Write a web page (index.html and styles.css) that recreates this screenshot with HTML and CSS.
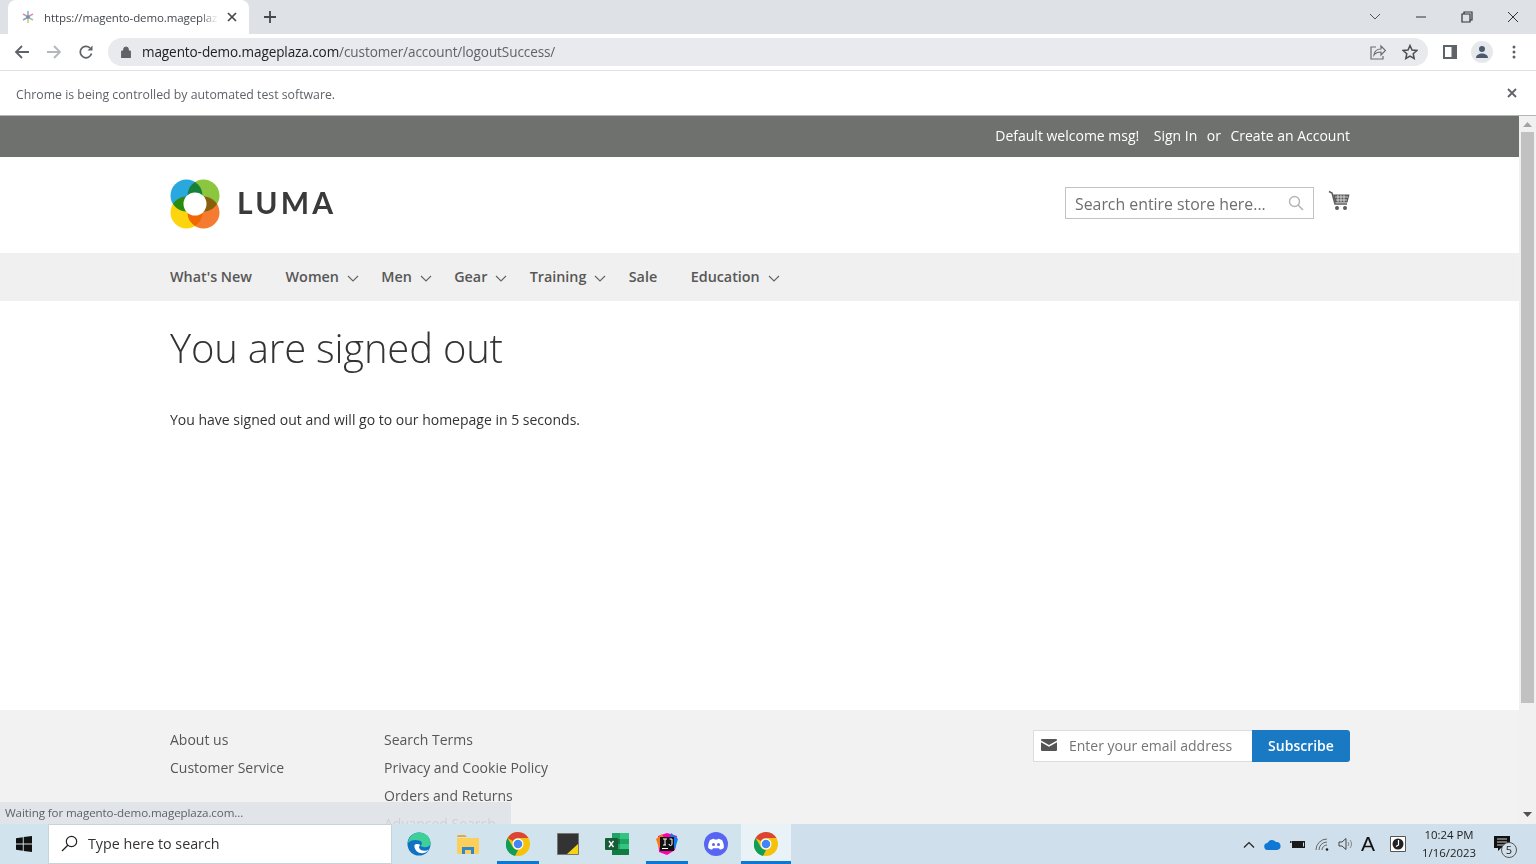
FILE: index.html
```html
<!DOCTYPE html>
<html>
<head>
    <meta charset="UTF-8">
    <meta name="viewport" content="width=device-width, initial-scale=1.0">
    <title>You are signed out</title>
    <link rel="stylesheet" href="styles.css">
</head>
<body>
    <div class="tabstrip">
        <div class="tab">
            <svg class="favicon" width="16" height="16" viewBox="0 0 16 16"><g fill="none" stroke-width="1.600"><path d="M8 2v5" stroke="#7fb5d8"/><path d="M13 5L8.500 7.500" stroke="#e58fb0"/><path d="M13 11L8.500 8.500" stroke="#9ac7a0"/><path d="M8 14V9" stroke="#e8c070"/><path d="M3 11l4.500-2.500" stroke="#8aa0d0"/><path d="M3 5l4.500 2.500" stroke="#d09a9a"/></g><circle cx="8" cy="8" r="1.800" fill="#6f8fb0"/></svg>
            <span class="tab-title">https://magento-demo.mageplaz</span>
            <svg class="tab-close" width="10" height="10" viewBox="0 0 10 10"><path d="M1 1l8 8M9 1l-8 8" stroke="#45484c" stroke-width="1.700"/></svg>
        </div>
        <svg class="new-tab" width="14" height="14" viewBox="0 0 14 14"><path d="M7 1v12M1 7h12" stroke="#45484c" stroke-width="1.800"/></svg>
        <div class="window-controls">
            <svg width="12" height="8" viewBox="0 0 12 8"><path d="M1 1l5 5 5-5" fill="none" stroke="#50535a" stroke-width="1"/></svg>
            <svg width="12" height="2" viewBox="0 0 12 2"><path d="M1 1h10" stroke="#30333a" stroke-width="1"/></svg>
            <svg width="12" height="12" viewBox="0 0 12 12"><path d="M3 3V1h8v8H9M1 3h8v8H1z" fill="none" stroke="#30333a" stroke-width="1.200"/></svg>
            <svg width="12" height="12" viewBox="0 0 12 12"><path d="M1 1l10 10M11 1L1 11" stroke="#30333a" stroke-width="1"/></svg>
        </div>
    </div>

    <div class="toolbar">
        <div class="nav-buttons">
            <svg width="16" height="16" viewBox="0 0 16 16"><path d="M15 8H2M8 2L2 8l6 6" fill="none" stroke="#5f6368" stroke-width="1.800"/></svg>
            <svg width="16" height="16" viewBox="0 0 16 16"><path d="M1 8h13M8 2l6 6-6 6" fill="none" stroke="#b4b7bb" stroke-width="1.800"/></svg>
            <svg width="16" height="16" viewBox="0 0 16 16"><path d="M13.500 9.500A5.700 5.700 0 1 1 12 4" fill="none" stroke="#5f6368" stroke-width="1.700"/><path d="M14.500 1.500v5h-5z" fill="#5f6368"/></svg>
        </div>
        <div class="omnibox">
            <svg class="lock" width="10" height="12" viewBox="0 0 10 12"><path d="M1 5h8a.8.8 0 0 1 .8.800v5.400a.8.8 0 0 1-.8.800H1a.8.8 0 0 1-.8-.8V5.800A.8.8 0 0 1 1 5zM2.600 5V3.400a2.400 2.400 0 0 1 4.800 0V5" fill="#5f6368" stroke="#5f6368"/></svg>
            <span class="url"><span class="url-host">magento-demo.mageplaza.com</span>/customer/account/logoutSuccess/</span>
            <div class="omnibox-icons">
                <svg width="16" height="16" viewBox="0 0 16 16"><path d="M6 3H1v12h12v-3" fill="none" stroke="#6a6d72" stroke-width="1.200"/><path d="M4 11c.5-4 3.500-6 7-6V2l4.500 4.500L11 11V8c-3 0-5.500 1-7 3z" fill="none" stroke="#6a6d72" stroke-width="1.200"/></svg>
                <svg width="16" height="16" viewBox="0 0 16 16"><path d="M8 1.500l2 4.500 4.800.5-3.600 3.200 1 4.800L8 12.100l-4.200 2.400 1-4.800L1.200 6.500 6 6z" fill="none" stroke="#4b4e53" stroke-width="1.500"/></svg>
            </div>
        </div>
        <div class="toolbar-right">
            <svg width="14" height="14" viewBox="0 0 14 14"><path d="M0 0h14v14H0z" fill="#5f6368"/><path d="M2 2h6.500v10H2z" fill="#fff"/></svg>
            <div class="avatar"><svg width="14" height="12" viewBox="0 0 14 12"><circle cx="7" cy="3" r="3" fill="#4c5a70"/><path d="M1 12c0-3 3-4.500 6-4.500s6 1.500 6 4.500z" fill="#4c5a70"/></svg></div>
            <svg width="4" height="14" viewBox="0 0 4 14"><g fill="#5f6368"><circle cx="2" cy="2" r="1.500"/><circle cx="2" cy="7" r="1.500"/><circle cx="2" cy="12" r="1.500"/></g></svg>
        </div>
    </div>

    <div class="infobar">
        <span class="infobar-text">Chrome is being controlled by automated test software.</span>
        <svg width="10" height="10" viewBox="0 0 10 10"><path d="M1 1l8 8M9 1l-8 8" stroke="#5f6368" stroke-width="1.800"/></svg>
    </div>

    <div class="viewport">
        <div class="page">
            <div class="panel">
                <div class="container panel-links">
                    <span class="welcome">Default welcome msg!</span>
                    <a>Sign In</a>
                    <span>or</span>
                    <a>Create an Account</a>
                </div>
            </div>
            <header class="container site-header">
                <div class="logo">
                    <svg width="50" height="50" viewBox="0 0 50 50">
                        <circle cx="16.500" cy="16.500" r="16" fill="#29a8df"/>
                        <circle cx="33.500" cy="16.500" r="16" fill="#8cc63f" class="logo-blend"/>
                        <circle cx="16.500" cy="33.500" r="16" fill="#fdd50f" class="logo-blend"/>
                        <circle cx="33.500" cy="33.500" r="16" fill="#f47b30" class="logo-blend"/>
                        <circle cx="25" cy="25" r="11.500" fill="#fff"/>
                    </svg>
                    <span class="logo-text">LUMA</span>
                </div>
                <div class="header-tools">
                    <div class="search">
                        <span class="search-text">Search entire store here...</span>
                        <svg width="16" height="16" viewBox="0 0 16 16"><circle cx="6.500" cy="6.500" r="5" fill="none" stroke="#b5b5b5" stroke-width="1.400"/><path d="M10 10l5 5" stroke="#b5b5b5" stroke-width="1.600"/></svg>
                    </div>
                    <svg class="cart" width="22" height="22" viewBox="0 0 22 22"><path d="M1 1.500l3 1.500 3 11h12" fill="none" stroke="#5a5a5a" stroke-width="1.500"/><path d="M5 4.500h16.500l-2 8H7z" fill="#5a5a5a"/><path d="M7 7h13M8 10h11M10 5v7M13 5v7M16 5v7" stroke="#fff" stroke-width=".7"/><circle cx="9" cy="18" r="2" fill="#5a5a5a"/><circle cx="17" cy="18" r="2" fill="#5a5a5a"/></svg>
                </div>
            </header>
            <nav class="navbar">
                <div class="container nav-items">
                    <a class="nav-plain">What's New</a>
                    <a class="nav-drop">Women<svg width="12" height="7" viewBox="0 0 12 7"><path d="M1 1l5 5 5-5" fill="none" stroke="#666" stroke-width="1.200"/></svg></a>
                    <a class="nav-drop">Men<svg width="12" height="7" viewBox="0 0 12 7"><path d="M1 1l5 5 5-5" fill="none" stroke="#666" stroke-width="1.200"/></svg></a>
                    <a class="nav-drop">Gear<svg width="12" height="7" viewBox="0 0 12 7"><path d="M1 1l5 5 5-5" fill="none" stroke="#666" stroke-width="1.200"/></svg></a>
                    <a class="nav-drop">Training<svg width="12" height="7" viewBox="0 0 12 7"><path d="M1 1l5 5 5-5" fill="none" stroke="#666" stroke-width="1.200"/></svg></a>
                    <a class="nav-plain">Sale</a>
                    <a class="nav-drop">Education<svg width="12" height="7" viewBox="0 0 12 7"><path d="M1 1l5 5 5-5" fill="none" stroke="#666" stroke-width="1.200"/></svg></a>
                </div>
            </nav>
            <main class="container content">
                <h1>You are signed out</h1>
                <p>You have signed out and will go to our homepage in 5 seconds.</p>
            </main>
            <footer class="footer">
                <div class="container footer-inner">
                    <ul class="footer-col">
                        <li>About us</li>
                        <li>Customer Service</li>
                    </ul>
                    <ul class="footer-col">
                        <li>Search Terms</li>
                        <li>Privacy and Cookie Policy</li>
                        <li>Orders and Returns</li>
                        <li>Advanced Search</li>
                    </ul>
                    <div class="newsletter">
                        <div class="email">
                            <svg width="16" height="12" viewBox="0 0 16 12"><path d="M1 0h14a1 1 0 0 1 1 1v.5L8 6 0 1.500V1a1 1 0 0 1 1-1zM0 3.300l8 4.500 8-4.500V11a1 1 0 0 1-1 1H1a1 1 0 0 1-1-1z" fill="#555"/></svg>
                            <span>Enter your email address</span>
                        </div>
                        <div class="subscribe">Subscribe</div>
                    </div>
                </div>
            </footer>
        </div>
        <div class="scrollbar">
            <svg width="9" height="5" viewBox="0 0 9 5"><path d="M4.500 0L9 5H0z" fill="#a3a3a3"/></svg>
            <div class="scroll-thumb"></div>
            <svg width="9" height="5" viewBox="0 0 9 5"><path d="M0 0h9L4.500 5z" fill="#505050"/></svg>
        </div>
        <div class="status-bubble">Waiting for magento-demo.mageplaza.com...</div>
    </div>

    <div class="taskbar">
        <svg class="start" width="16" height="16" viewBox="0 0 16 16"><path d="M0 2.200l6.800-1v6.300H0zM7.700 1.100L16 0v7.500H7.700zM0 8.500h6.800v6.300l-6.800-1zM7.700 8.500H16V16l-8.300-1.100z" fill="#111"/></svg>
        <div class="task-search">
            <svg width="17" height="17" viewBox="0 0 17 17"><circle cx="10.500" cy="6.500" r="5.200" fill="none" stroke="#222" stroke-width="1.200"/><path d="M6.800 10.200L1 16" stroke="#222" stroke-width="1.300"/></svg>
            <span>Type here to search</span>
        </div>
        <div class="task-icons">
            <div class="task-icon">
                <svg width="24" height="24" viewBox="0 0 26 26"><circle cx="13" cy="13" r="12.500" fill="#1172c4"/><path d="M1 12C2 5 7 .5 13 .5c7 0 12.500 5 12.500 11.500 0 3-2.500 4.500-6 4.500-2 0-4-.5-5-1.500 2-1 2.500-4-.5-5.500C10 8 4 8 1 12z" fill="#3fd09a"/><path d="M8 15c0 5 4 8 8 8 3 0 6-1.500 8-4-3 2-9 2-10.500-1-1-2 0-3.500 1-4-3-1.500-6.500-1-6.500 1z" fill="#fff"/></svg>
            </div>
            <div class="task-icon">
                <svg width="24" height="22" viewBox="0 0 24 22"><path d="M1 4a2 2 0 0 1 2-2h6l2 2H1z" fill="#e8a92c"/><path d="M1 5h22v15a1 1 0 0 1-1 1H2a1 1 0 0 1-1-1z" fill="#fbcf5b"/><path d="M6 21v-7h12v7h-3v-4H9v4z" fill="#2f88c8"/></svg>
            </div>
            <div class="task-icon is-open">
                <svg width="24" height="24" viewBox="0 0 24 24"><circle cx="12" cy="12" r="12" fill="#f4c20d"/><path d="M12 0a12 12 0 0 1 10.400 6H12a6 6 0 0 0-5.200 3L1.600 6A12 12 0 0 1 12 0z" fill="#db4437"/><path d="M1.600 6L6.800 15a6 6 0 0 0 5.200 3l-3 6A12 12 0 0 1 1.600 6z" fill="#0f9d58"/><circle cx="12" cy="12" r="5.500" fill="#fff"/><circle cx="12" cy="12" r="4.300" fill="#4285f4"/></svg>
            </div>
            <div class="task-icon">
                <svg width="22" height="22" viewBox="0 0 22 22"><path d="M.5.500h21v21H.5z" fill="#333" stroke="#777"/><path d="M21 11v10H10z" fill="#f6d313"/></svg>
            </div>
            <div class="task-icon">
                <svg width="24" height="22" viewBox="0 0 24 22"><path d="M7 0h16a1 1 0 0 1 1 1v20a1 1 0 0 1-1 1H7z" fill="#21a366"/><path d="M15 0h8a1 1 0 0 1 1 1v5h-9zM15 11h9v5h-9z" fill="#33c481"/><path d="M7 6h8v5H7zM7 16h17v5a1 1 0 0 1-1 1H7z" fill="#107c41"/><path d="M1 5h11a1 1 0 0 1 1 1v10a1 1 0 0 1-1 1H1a1 1 0 0 1-1-1V6a1 1 0 0 1 1-1z" fill="#185c37"/><path d="M4 8l4.500 6M8.500 8L4 14" stroke="#fff" stroke-width="1.300"/></svg>
            </div>
            <div class="task-icon is-open">
                <svg width="24" height="24" viewBox="0 0 24 24"><path d="M3 4L12 1l10 3-2 14-8 5-8-3z" fill="#f0a"/><path d="M1 7l6-5 4 8-7 6z" fill="#f97a12"/><path d="M16 1l7 6-3 10-5-7z" fill="#087cfa"/><path d="M5 5h14v14H5z" fill="#111"/><path d="M7 16h6v1H7z" fill="#fff"/><path d="M8 7h4M10 7v6M8 13h3M14.500 7h2.500v5a1.500 1.500 0 0 1-3 0" fill="none" stroke="#fff" stroke-width="1"/></svg>
            </div>
            <div class="task-icon">
                <svg width="24" height="24" viewBox="0 0 24 24"><circle cx="12" cy="12" r="12" fill="#5865f2"/><path d="M6 8c2-1 3.500-1.300 4-1.300l.5.800a10 10 0 0 1 3 0l.5-.8c.5 0 2 .3 4 1.300 1.500 2.500 2 5.500 1.800 8-1.500 1-3 1.500-4 1.500l-.8-1.200H9l-.8 1.200c-1 0-2.500-.5-4-1.500C4 13.500 4.500 10.500 6 8z" fill="#fff"/><circle cx="9.500" cy="12.500" r="1.500" fill="#5865f2"/><circle cx="14.500" cy="12.500" r="1.500" fill="#5865f2"/></svg>
            </div>
            <div class="task-icon is-open is-active">
                <svg width="24" height="24" viewBox="0 0 24 24"><circle cx="12" cy="12" r="12" fill="#f4c20d"/><path d="M12 0a12 12 0 0 1 10.400 6H12a6 6 0 0 0-5.200 3L1.600 6A12 12 0 0 1 12 0z" fill="#db4437"/><path d="M1.600 6L6.800 15a6 6 0 0 0 5.200 3l-3 6A12 12 0 0 1 1.600 6z" fill="#0f9d58"/><circle cx="12" cy="12" r="5.500" fill="#fff"/><circle cx="12" cy="12" r="4.300" fill="#4285f4"/></svg>
            </div>
        </div>
        <div class="tray">
            <svg width="12" height="7" viewBox="0 0 12 7"><path d="M1 6.500l5-5 5 5" fill="none" stroke="#222" stroke-width="1.200"/></svg>
            <svg width="17" height="11" viewBox="0 0 17 11"><path d="M4 11a3.500 3.500 0 0 1-.5-7A5 5 0 0 1 12 3a4 4 0 0 1 1 8z" fill="#0f78d4"/></svg>
            <svg width="16" height="10" viewBox="0 0 16 10"><path d="M2 2h13v7H2z" fill="#1a1a1a"/><path d="M0 3h1.500M.8 2v2" stroke="#1a1a1a"/><path d="M13 3.500h1v4h-1z" fill="#ddd"/></svg>
            <svg width="14" height="13" viewBox="0 0 14 13"><path d="M1 12A11 11 0 0 1 12 1M4 12a8 8 0 0 1 8-8M7 12a5 5 0 0 1 5-5" fill="none" stroke="#666" stroke-width="1"/><circle cx="12" cy="11.500" r="1.300" fill="#222"/></svg>
            <svg width="16" height="14" viewBox="0 0 16 14"><path d="M1 5h3l4-3.500v11L4 9H1z" fill="none" stroke="#444" stroke-width="1"/><path d="M10 5a3 3 0 0 1 0 4M12 3a6 6 0 0 1 0 8" fill="none" stroke="#888" stroke-width="1"/></svg>
            <span class="ime">A</span>
            <svg class="night-light" width="16" height="16" viewBox="0 0 16 16"><path d="M0 0h16v16H0z" fill="#fff"/><path d="M.5.500h15v15H.5z" fill="none" stroke="#555"/><circle cx="8" cy="8" r="5.500" fill="#222"/><path d="M8.500 4v5l-2.500 1.500" fill="none" stroke="#fff" stroke-width="1.200"/></svg>
            <div class="clock"><span>10:24 PM</span><span>1/16/2023</span></div>
            <div class="notify">
                <svg width="16" height="16" viewBox="0 0 16 16"><path d="M0 0h16v12H7l-3 3v-3H0z" fill="#111"/><path d="M3 3h10M3 6h10M3 9h7" stroke="#fff" stroke-width=".8"/></svg>
                <span class="notify-count">5</span>
            </div>
        </div>
    </div>
</body>
</html>
```

FILE: styles.css
```css
* {
    box-sizing: border-box;
}

html, body {
    height: 100%;
}

body {
    margin: 0;
    overflow: hidden;
    display: flex;
    flex-direction: column;
    font-family: "Open Sans", sans-serif;
    color: #333;
    background: #fff;
}

svg {
    display: block;
    flex-shrink: 0;
}

/* browser chrome */
.tabstrip {
    height: 34px;
    display: flex;
    align-items: center;
    background: #dee1e6;
    padding-left: 8px;
}

.tab {
    width: 241px;
    height: 34px;
    align-self: flex-end;
    display: flex;
    align-items: center;
    background: #fff;
    border-radius: 8px 8px 0 0;
    padding: 0 12px;
}

.tab-title {
    width: 175px;
    margin-left: 8px;
    overflow: hidden;
    white-space: nowrap;
    font-size: 11.500px;
    letter-spacing: -0.1px;
    color: #44474b;
    -webkit-mask-image: linear-gradient(to right, #000 90%, transparent);
    mask-image: linear-gradient(to right, #000 90%, transparent);
}

.tab-close {
    margin-left: 9px;
}

.new-tab {
    margin-left: 14px;
}

.window-controls {
    margin-left: auto;
    padding-right: 17px;
    display: flex;
    align-items: center;
    gap: 34px;
}

.toolbar {
    height: 37px;
    display: flex;
    align-items: center;
    background: #fff;
    border-bottom: 1px solid #dfe1e5;
}

.nav-buttons {
    width: 108px;
    padding-left: 14px;
    display: flex;
    gap: 16px;
}

.omnibox {
    width: 1320px;
    height: 28px;
    display: flex;
    align-items: center;
    background: #e8eaed;
    border-radius: 14px;
    padding: 0 10px 0 13px;
}

.url {
    margin-left: 11px;
    font-size: 13.550px;
    letter-spacing: -0.1px;
    color: #5f6368;
}

.url-host {
    color: #202124;
}

.omnibox-icons {
    margin-left: auto;
    display: flex;
    gap: 16px;
}

.toolbar-right {
    flex: 1;
    display: flex;
    align-items: center;
    padding-left: 15px;
}

.avatar {
    width: 22px;
    height: 22px;
    margin-left: 14px;
    margin-right: 19px;
    border-radius: 50%;
    background: #e6e8ec;
    display: flex;
    align-items: center;
    justify-content: center;
}

.infobar {
    height: 45px;
    display: flex;
    align-items: center;
    justify-content: space-between;
    padding: 0 19px 0 16px;
    border-bottom: 1px solid #b5b5b5;
    background: #fff;
    font-size: 12.300px;
    color: #5f6368;
}

.infobar-text {
    margin-top: 2px;
}

/* page in the browser */
.viewport {
    flex: 1;
    min-height: 0;
    display: flex;
    position: relative;
}

.page {
    flex: 1;
    overflow: hidden;
    display: flex;
    flex-direction: column;
}

.container {
    width: 1180px;
    margin-left: 170px;
}

.panel {
    height: 41px;
    flex-shrink: 0;
    background: #6e716e;
    color: #fff;
    font-size: 14px;
}

.panel-links {
    height: 100%;
    display: flex;
    align-items: center;
    justify-content: flex-end;
    gap: 9.500px;
    padding-bottom: 2px;
}

.welcome {
    margin-right: 5px;
}

.site-header {
    height: 96px;
    flex-shrink: 0;
    display: flex;
    justify-content: space-between;
}

.logo {
    display: flex;
    align-items: center;
    gap: 17px;
    padding-bottom: 2px;
}

.logo-blend {
    mix-blend-mode: multiply;
}

.logo-text {
    font-family: "Lato", sans-serif;
    font-size: 30px;
    font-weight: 700;
    letter-spacing: 3.200px;
    line-height: 32px;
    margin-top: -4px;
    color: #3a3a3a;
}

.header-tools {
    display: flex;
    align-items: flex-start;
    padding-top: 30px;
    gap: 14px;
}

.search {
    width: 249px;
    height: 32px;
    display: flex;
    align-items: center;
    justify-content: space-between;
    padding: 0 9px;
    border: 1px solid #c2c2c2;
    background: #fff;
    font-size: 15.850px;
    color: #6f6f6f;
}

.search-text {
    margin-top: 1px;
}

.cart {
    margin-top: 3px;
}

.navbar {
    height: 48px;
    flex-shrink: 0;
    background: #f0f0f0;
}

.nav-items {
    height: 100%;
    display: flex;
    align-items: center;
    font-size: 14.350px;
    font-weight: 600;
    color: #575757;
    padding-bottom: 2px;
}

.nav-items a {
    display: flex;
    align-items: center;
}

.nav-plain {
    margin-right: 33.500px;
}

.nav-drop {
    margin-right: 22.300px;
}

.nav-drop svg {
    margin-left: 8px;
    margin-top: 4px;
}

.content {
    flex: 1;
    padding-top: 20px;
}

.content h1 {
    margin: 0;
    font-size: 40px;
    font-weight: 300;
    line-height: 54px;
    letter-spacing: -0.2px;
    color: #333;
}

.content p {
    margin: 35px 0 0;
    font-size: 14px;
    line-height: 20px;
}

.footer {
    height: 114px;
    flex-shrink: 0;
    overflow: hidden;
    background: #f2f2f2;
    font-size: 14px;
    color: #575757;
}

.footer-inner {
    display: flex;
    padding-top: 16px;
}

.footer-col {
    width: 214px;
    margin: 0;
    padding: 0;
    list-style: none;
}

.footer-col li {
    height: 28px;
    line-height: 28px;
}

.newsletter {
    margin-left: auto;
    margin-top: 4px;
    height: 32px;
    display: flex;
}

.email {
    width: 219px;
    display: flex;
    align-items: center;
    gap: 12px;
    padding: 0 0 2px 7px;
    border: 1px solid #dcdcdc;
    border-right: 0;
    background: #fff;
    color: #757575;
}

.subscribe {
    width: 98px;
    display: flex;
    align-items: center;
    justify-content: center;
    padding-bottom: 2px;
    background: #1979c3;
    border-radius: 0 3px 3px 0;
    color: #fff;
    font-weight: 600;
}

.scrollbar {
    width: 17px;
    display: flex;
    flex-direction: column;
    align-items: center;
    padding: 6px 0 7px;
    background: #f1f1f1;
}

.scroll-thumb {
    width: 13px;
    height: 571px;
    margin-top: 5px;
    margin-bottom: auto;
    background: #c1c1c1;
}

.status-bubble {
    position: absolute;
    left: 0;
    bottom: 0;
    width: 511px;
    height: 22px;
    padding: 3px 5px 0;
    background: rgba(222, 225, 230, 0.88);
    border-top-right-radius: 3px;
    font-size: 11.600px;
    color: #5f6368;
    letter-spacing: -0.1px;
}

/* windows taskbar */
.taskbar {
    height: 40px;
    display: flex;
    align-items: center;
    background: #d1e4ee;
}

.start {
    margin-left: 16px;
}

.task-search {
    width: 344px;
    height: 40px;
    margin-left: 16px;
    display: flex;
    align-items: center;
    gap: 10px;
    padding: 0 0 1px 12px;
    background: #fff;
    border: 1px solid #c9d4da;
    font-size: 14.300px;
    color: #333;
}

.task-icons {
    display: flex;
    height: 100%;
    padding-left: 2px;
}

.task-icon {
    position: relative;
    width: 49.600px;
    height: 100%;
    display: flex;
    align-items: center;
    justify-content: center;
    padding-bottom: 1px;
}

.is-open::after {
    content: "";
    position: absolute;
    left: 4px;
    right: 4px;
    bottom: 0;
    height: 3px;
    background: #0a78d4;
}

.is-active {
    background: #e9f3f7;
}

.is-active::after {
    left: 0;
    right: 0;
}

.tray {
    flex: 1;
    height: 100%;
    display: flex;
    align-items: center;
    justify-content: flex-end;
    gap: 9px;
    padding-right: 26px;
    background: #cfdfeb;
}

.ime {
    margin-left: -2px;
    font-size: 21px;
    color: #111;
    font-family: "Liberation Sans", sans-serif;
}

.night-light {
    margin-left: 6px;
}

.clock {
    display: flex;
    flex-direction: column;
    align-items: center;
    gap: 2px;
    margin-left: 7px;
    font-size: 11.400px;
    line-height: 16px;
    color: #222;
}

.notify {
    position: relative;
    margin-left: 9px;
}

.notify-count {
    position: absolute;
    left: 7px;
    top: 6px;
    width: 16px;
    height: 16px;
    border: 1px solid #555;
    border-radius: 50%;
    background: #d0dfe9;
    font-size: 11px;
    line-height: 14px;
    text-align: center;
    color: #222;
}
```
